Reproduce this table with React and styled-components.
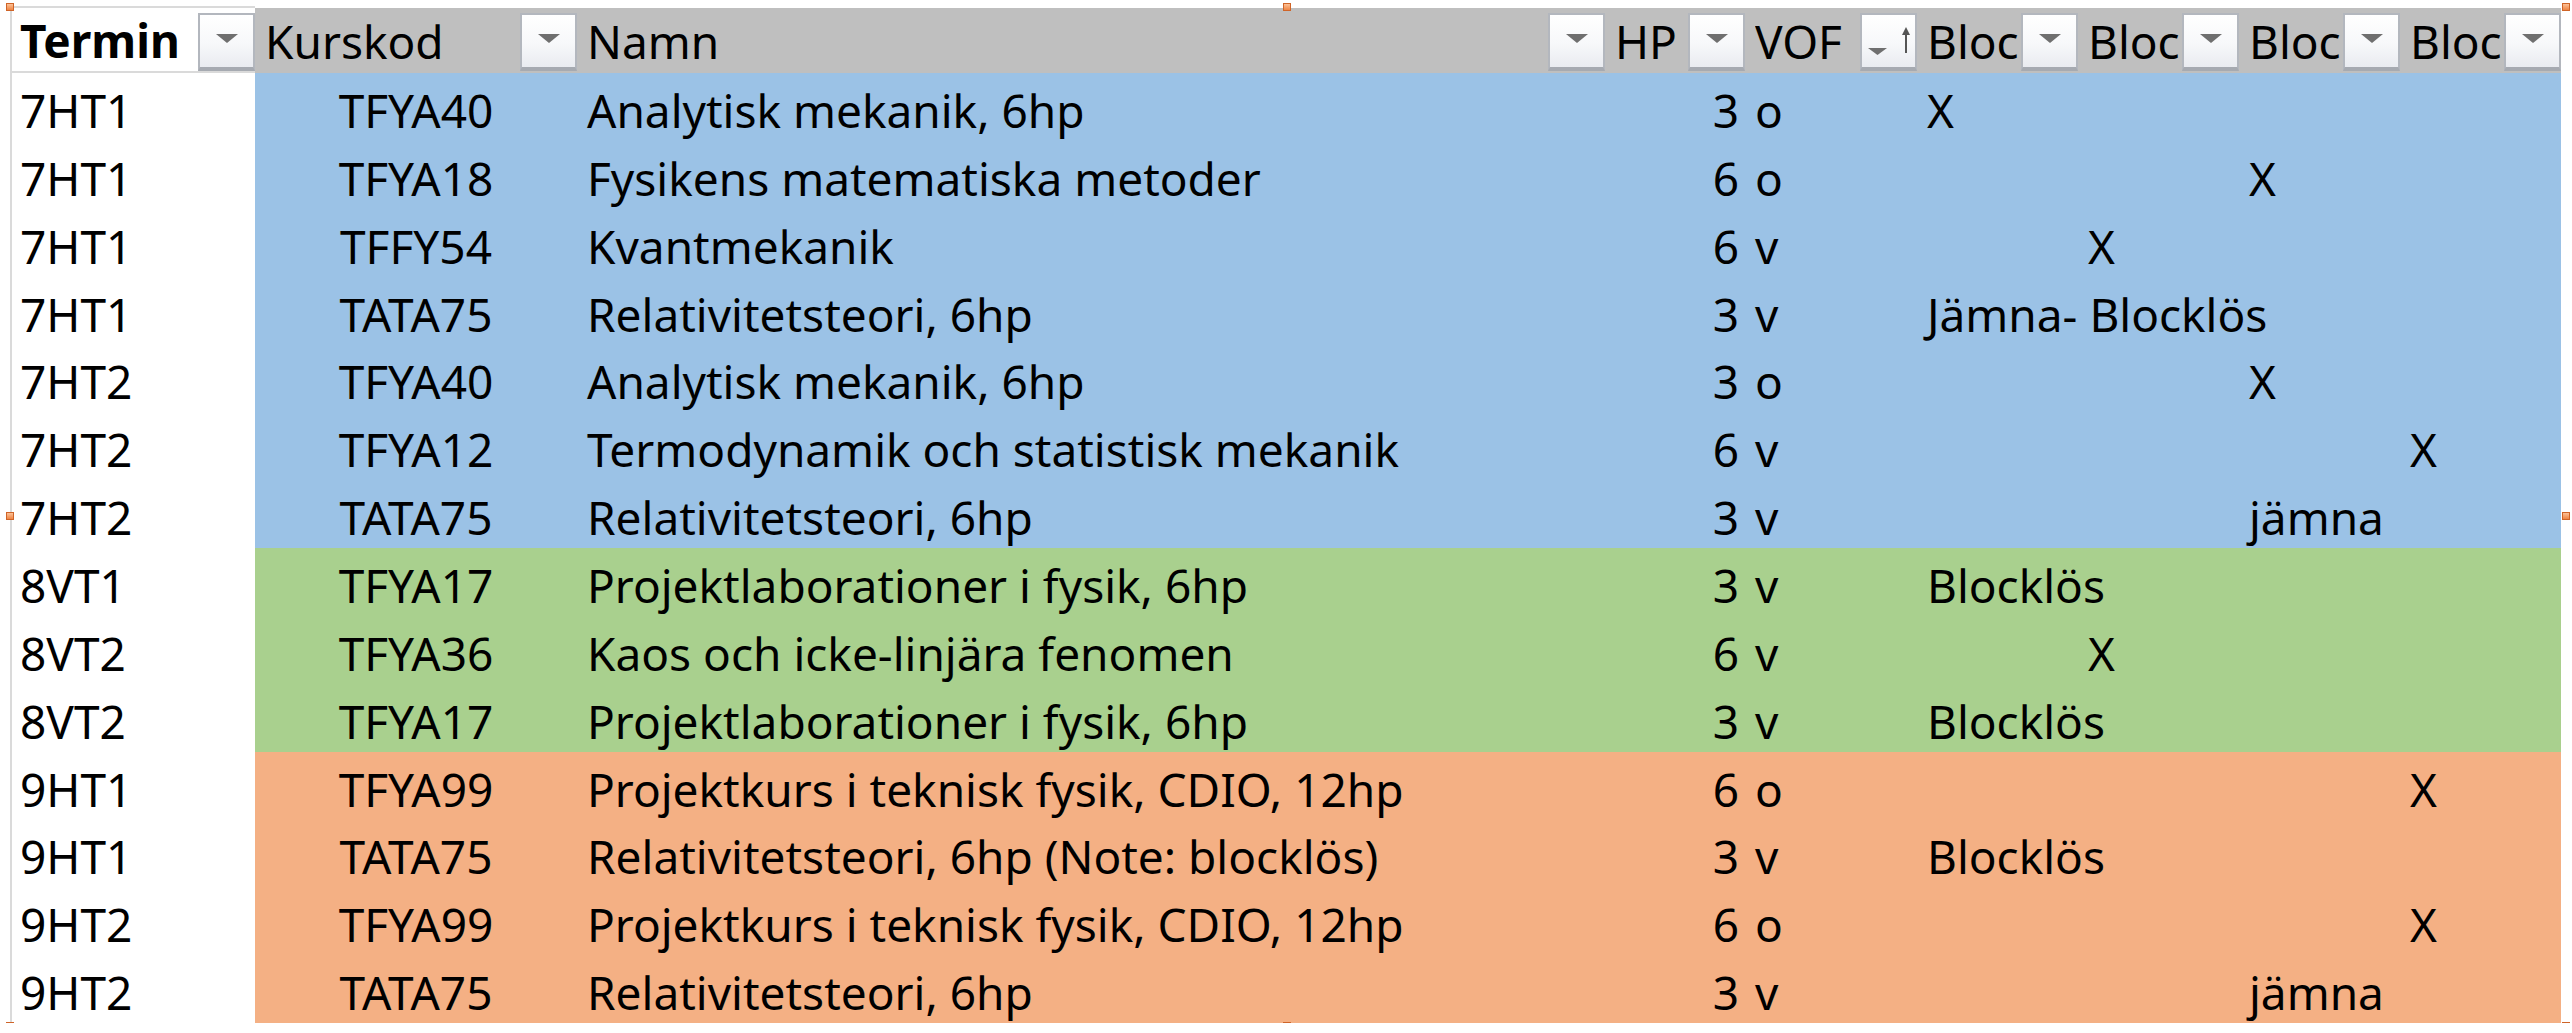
import styled, { createGlobalStyle } from 'styled-components';

const GlobalStyle = createGlobalStyle`
  html, body {
    margin: 0;
    padding: 0;
    background: #fff;
    overflow: hidden;
  }
  body {
    font-family: "Noto Sans", "Open Sans", sans-serif;
    color: #000;
  }
`;

const COLUMNS = '245px 322px 1028px 140px 172px 161px 161px 161px 161px';

const TONES = {
  blue: '#9bc2e6',
  green: '#a9d08e',
  orange: '#f4b084',
};

const GRID_LINE = '#dadada';

const Sheet = styled.div`
  position: relative;
  width: 2551px;
  margin: 6px 0 0 10px;
`;

const HeaderRow = styled.div`
  display: grid;
  grid-template-columns: ${COLUMNS};
  height: 67px;
`;

const HeaderCell = styled.div`
  display: flex;
  align-items: center;
  box-sizing: border-box;
  min-width: 0;
  border-top: 2px solid ${(p) => (p.$first ? GRID_LINE : '#fff')};
  border-left: ${(p) => (p.$first ? `2px solid ${GRID_LINE}` : 'none')};
  border-bottom: ${(p) => (p.$first ? `2px solid ${GRID_LINE}` : 'none')};
  background: ${(p) => (p.$first ? '#fff' : '#bfbfbf')};
  padding-left: ${(p) => (p.$first ? 8 : 10)}px;
  font-size: 46px;
  font-weight: ${(p) => (p.$first ? 700 : 400)};
  white-space: nowrap;
`;

const Label = styled.span`
  flex: 1;
  min-width: 0;
  overflow: hidden;
`;

const FilterButton = styled.span`
  flex: none;
  align-self: flex-end;
  margin-bottom: ${(p) => (p.$first ? 0 : 2)}px;
  width: 57px;
  height: 58px;
  box-sizing: border-box;
  border: 2px solid #b3b7be;
  border-bottom: 4px solid #a6aab1;
  background: linear-gradient(#ffffff 0%, #f7f8fa 55%, #e9ebf0 100%);

  svg {
    display: block;
  }
`;

const BodyRow = styled.div`
  display: grid;
  grid-template-columns: ${COLUMNS};
  height: 67.86px;
  background: ${(p) => TONES[p.$tone]};
`;

const Cell = styled.div`
  display: flex;
  align-items: center;
  justify-content: ${(p) =>
    p.$align === 'center' ? 'center' : p.$align === 'right' ? 'flex-end' : 'flex-start'};
  box-sizing: border-box;
  min-width: 0;
  padding: 4px ${(p) => (p.$align === 'right' ? 6 : 10)}px 0 10px;
  font-size: 46px;
  white-space: nowrap;
`;

const TermCell = styled(Cell)`
  background: #fff;
  border-left: 2px solid ${GRID_LINE};
  border-bottom: 2px solid ${GRID_LINE};
  padding: 6px 0 0 8px;
`;

const Handle = styled.span`
  position: absolute;
  left: ${(p) => p.$x}px;
  top: ${(p) => p.$y}px;
  width: 8px;
  height: 8px;
  box-sizing: border-box;
  border: 1px solid #cf6428;
  background: linear-gradient(#fcc196, #ef8544);
`;

const Arrow = () => (
  <svg width="53" height="52" viewBox="0 0 53 52">
    <polygon points="16,19 38,19 27,28" fill="#6f6f6f" />
  </svg>
);

const SortArrow = () => (
  <svg width="53" height="52" viewBox="0 0 53 52">
    <polygon points="6,33 25,33 15.5,40" fill="#6f6f6f" />
    <rect x="43" y="16" width="2" height="22" fill="#555" />
    <polygon points="40,20 48,20 44,12" fill="#555" />
  </svg>
);

const headers = [
  { label: 'Termin', first: true },
  { label: 'Kurskod' },
  { label: 'Namn' },
  { label: 'HP' },
  { label: 'VOF', sorted: true },
  { label: 'Bloc' },
  { label: 'Bloc' },
  { label: 'Bloc' },
  { label: 'Bloc' },
];

const rows = [
  ['7HT1', 'TFYA40', 'Analytisk mekanik, 6hp', '3', 'o', ['X', '', '', ''], 'blue'],
  ['7HT1', 'TFYA18', 'Fysikens matematiska metoder', '6', 'o', ['', '', 'X', ''], 'blue'],
  ['7HT1', 'TFFY54', 'Kvantmekanik', '6', 'v', ['', 'X', '', ''], 'blue'],
  ['7HT1', 'TATA75', 'Relativitetsteori, 6hp', '3', 'v', ['Jämna- Blocklös', '', '', ''], 'blue'],
  ['7HT2', 'TFYA40', 'Analytisk mekanik, 6hp', '3', 'o', ['', '', 'X', ''], 'blue'],
  ['7HT2', 'TFYA12', 'Termodynamik och statistisk mekanik', '6', 'v', ['', '', '', 'X'], 'blue'],
  ['7HT2', 'TATA75', 'Relativitetsteori, 6hp', '3', 'v', ['', '', 'jämna', ''], 'blue'],
  ['8VT1', 'TFYA17', 'Projektlaborationer i fysik, 6hp', '3', 'v', ['Blocklös', '', '', ''], 'green'],
  ['8VT2', 'TFYA36', 'Kaos och icke-linjära fenomen', '6', 'v', ['', 'X', '', ''], 'green'],
  ['8VT2', 'TFYA17', 'Projektlaborationer i fysik, 6hp', '3', 'v', ['Blocklös', '', '', ''], 'green'],
  ['9HT1', 'TFYA99', 'Projektkurs i teknisk fysik, CDIO, 12hp', '6', 'o', ['', '', '', 'X'], 'orange'],
  ['9HT1', 'TATA75', 'Relativitetsteori, 6hp (Note: blocklös)', '3', 'v', ['Blocklös', '', '', ''], 'orange'],
  ['9HT2', 'TFYA99', 'Projektkurs i teknisk fysik, CDIO, 12hp', '6', 'o', ['', '', '', 'X'], 'orange'],
  ['9HT2', 'TATA75', 'Relativitetsteori, 6hp', '3', 'v', ['', '', 'jämna', ''], 'orange'],
];

// selection handles around the table (picture frame)
const handles = [
  [-4, -3], [1273, -3], [2552, -3],
  [-4, 506], [2552, 506],
  [-4, 1016], [1273, 1016], [2552, 1016],
];

export default function App() {
  return (
    <>
      <GlobalStyle />
      <Sheet>
        <HeaderRow>
          {headers.map((h, i) => (
            <HeaderCell key={i} $first={h.first}>
              <Label>{h.label}</Label>
              <FilterButton $first={h.first}>
                {h.sorted ? <SortArrow /> : <Arrow />}
              </FilterButton>
            </HeaderCell>
          ))}
        </HeaderRow>
        {rows.map(([term, code, name, hp, vof, blocks, tone], i) => (
          <BodyRow key={i} $tone={tone}>
            <TermCell>{term}</TermCell>
            <Cell $align="center">{code}</Cell>
            <Cell>{name}</Cell>
            <Cell $align="right">{hp}</Cell>
            <Cell>{vof}</Cell>
            {blocks.map((b, j) => (
              <Cell key={j}>{b}</Cell>
            ))}
          </BodyRow>
        ))}
        {handles.map(([x, y], i) => (
          <Handle key={i} $x={x} $y={y} />
        ))}
      </Sheet>
    </>
  );
}
